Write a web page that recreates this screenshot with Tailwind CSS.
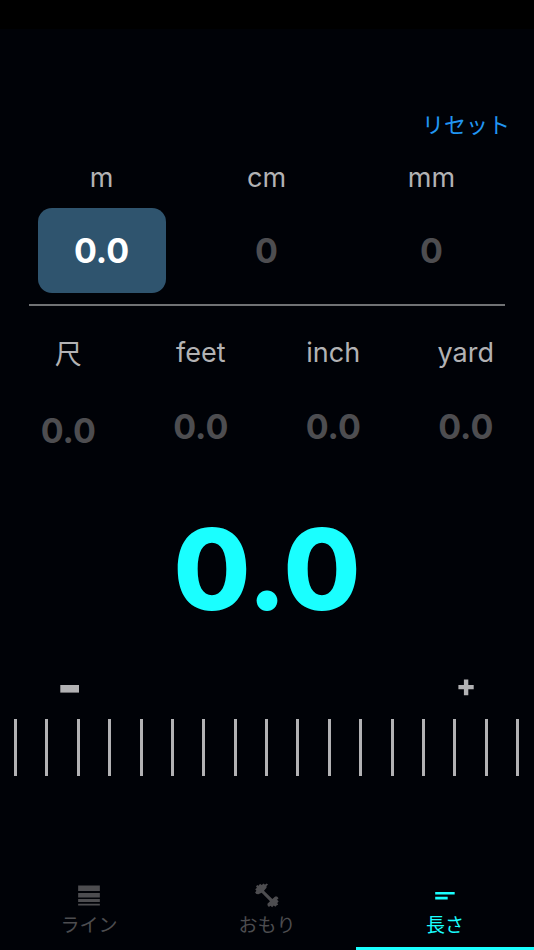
<!DOCTYPE html>
<html lang="ja">
<head>
<meta charset="utf-8">
<meta name="viewport" content="width=device-width, initial-scale=1">
<title>長さ</title>
<script src="https://cdn.jsdelivr.net/npm/@tailwindcss/browser@4"></script>
</head>
<body class="flex min-h-screen flex-col bg-[#000207] font-['Inter','Noto_Sans_CJK_JP',sans-serif] text-[#b2b2b4]">
<div class="h-[29px] bg-black"></div>
<main class="flex flex-1 flex-col">
  <div class="flex justify-end px-6 pt-20">
    <button type="button" class="text-[22px] leading-8 text-[#2196f3]">リセット</button>
  </div>

  <section class="mt-[19px] grid grid-cols-3 pr-5 pl-[19px] text-center text-[27px]">
    <div class="flex flex-col items-center gap-3">
      <span class="leading-9">m</span>
      <button type="button" class="h-[85px] w-32 rounded-[14px] bg-[#2f546e] text-[34px] font-bold text-white">0.0</button>
    </div>
    <div class="flex flex-col items-center gap-3">
      <span class="leading-9">cm</span>
      <button type="button" class="h-[85px] w-32 rounded-[14px] text-[34px] font-bold text-[#4d4d50]">0</button>
    </div>
    <div class="flex flex-col items-center gap-3">
      <span class="leading-9">mm</span>
      <button type="button" class="h-[85px] w-32 rounded-[14px] text-[34px] font-bold text-[#4d4d50]">0</button>
    </div>
  </section>

  <hr class="mx-[29px] mt-[11px] border-t-2 border-[#707274]">

  <section class="mt-[29px] grid grid-cols-4 px-0.5 text-center text-[27px]">
    <div class="flex flex-col items-center gap-[13px]">
      <span class="leading-10">尺</span>
      <button type="button" class="h-[85px] w-full text-[34px] font-bold text-[#4d4d50]">0.0</button>
    </div>
    <div class="flex flex-col items-center gap-[13px]">
      <span class="leading-9">feet</span>
      <button type="button" class="h-[85px] w-full text-[34px] font-bold text-[#4d4d50]">0.0</button>
    </div>
    <div class="flex flex-col items-center gap-[13px]">
      <span class="leading-9">inch</span>
      <button type="button" class="h-[85px] w-full text-[34px] font-bold text-[#4d4d50]">0.0</button>
    </div>
    <div class="flex flex-col items-center gap-[13px]">
      <span class="leading-9">yard</span>
      <button type="button" class="h-[85px] w-full text-[34px] font-bold text-[#4d4d50]">0.0</button>
    </div>
  </section>

  <output class="mt-6 block text-center text-[112px] leading-[144px] font-extrabold text-[#1affff]">0.0</output>

  <div class="mt-[30px] flex justify-between pr-[52px] pl-[53px]">
    <button type="button" aria-label="減らす" class="flex size-8 items-center justify-center">
      <svg class="size-5" viewBox="0 0 20 20" fill="currentColor"><path d="M1.3 8h18.7v7.6H1.3z"/></svg>
    </button>
    <button type="button" aria-label="増やす" class="flex size-8 items-center justify-center">
      <svg class="size-5" viewBox="0 0 20 20" fill="currentColor"><path d="M7.9 2.4h4.4v5.7h5.4v4.2h-5.4v6H7.9v-6H2.4V8.1h5.5z"/></svg>
    </button>
  </div>

  <div class="mt-4 flex h-[57px] justify-between pr-[15px] pl-[14px]" aria-hidden="true">
    <i class="w-[3px] bg-current"></i><i class="w-[3px] bg-current"></i><i class="w-[3px] bg-current"></i><i class="w-[3px] bg-current"></i><i class="w-[3px] bg-current"></i><i class="w-[3px] bg-current"></i><i class="w-[3px] bg-current"></i><i class="w-[3px] bg-current"></i><i class="w-[3px] bg-current"></i><i class="w-[3px] bg-current"></i><i class="w-[3px] bg-current"></i><i class="w-[3px] bg-current"></i><i class="w-[3px] bg-current"></i><i class="w-[3px] bg-current"></i><i class="w-[3px] bg-current"></i><i class="w-[3px] bg-current"></i><i class="w-[3px] bg-current"></i>
  </div>
</main>

<nav class="grid grid-cols-3 text-[19px] leading-8 text-[#4d4d50]">
  <a href="#line" class="flex flex-col items-center border-b-3 border-transparent pb-[5px]">
    <svg class="size-7" viewBox="0 0 24 24" fill="currentColor"><path d="M2.7 3h18.6v4.8H2.7zM2.7 9.5h18.6v3.7H2.7zM2.7 14.6h18.6v2.6H2.7zM2.7 18.6h18.6v1.5H2.7z"/></svg>
    <span>ライン</span>
  </a>
  <a href="#weight" class="flex flex-col items-center border-b-3 border-transparent pb-[5px]">
    <svg class="size-7" viewBox="0 0 24 24" fill="currentColor"><path d="M20.6 15.2 21.9 14 20.6 12.4 19 12.4 16.6 14.6 9.4 7.4 11.6 5 11.6 3.4 12.9 2.2 11.6 1.2 10.2 2.4 9.2 1.2 7.4 2.6 6 1.6 4.8 3.2 3.6 2.6 2.6 3.8 3.4 5 1.9 6.2 2.9 7.6 1.8 9 2.9 10.2 4.6 10.4 7.4 9.2 14.6 16.4 12.4 18.6 12.4 20 13.6 21.4 15 20.4 16.4 21.6 17.8 20.2 19.2 21.2 20.4 20 21.6 19.4 20.8 18 22 16.6z"/></svg>
    <span>おもり</span>
  </a>
  <a href="#length" aria-current="page" class="flex flex-col items-center border-b-3 border-[#1affff] pb-[5px] text-[#1affff]">
    <svg class="size-7" viewBox="0 0 24 24" fill="currentColor"><path d="M3.6 8.5h16.7v2.3H3.6zM3.6 12.6h10.7v2.3H3.6z"/></svg>
    <span>長さ</span>
  </a>
</nav>
</body>
</html>
